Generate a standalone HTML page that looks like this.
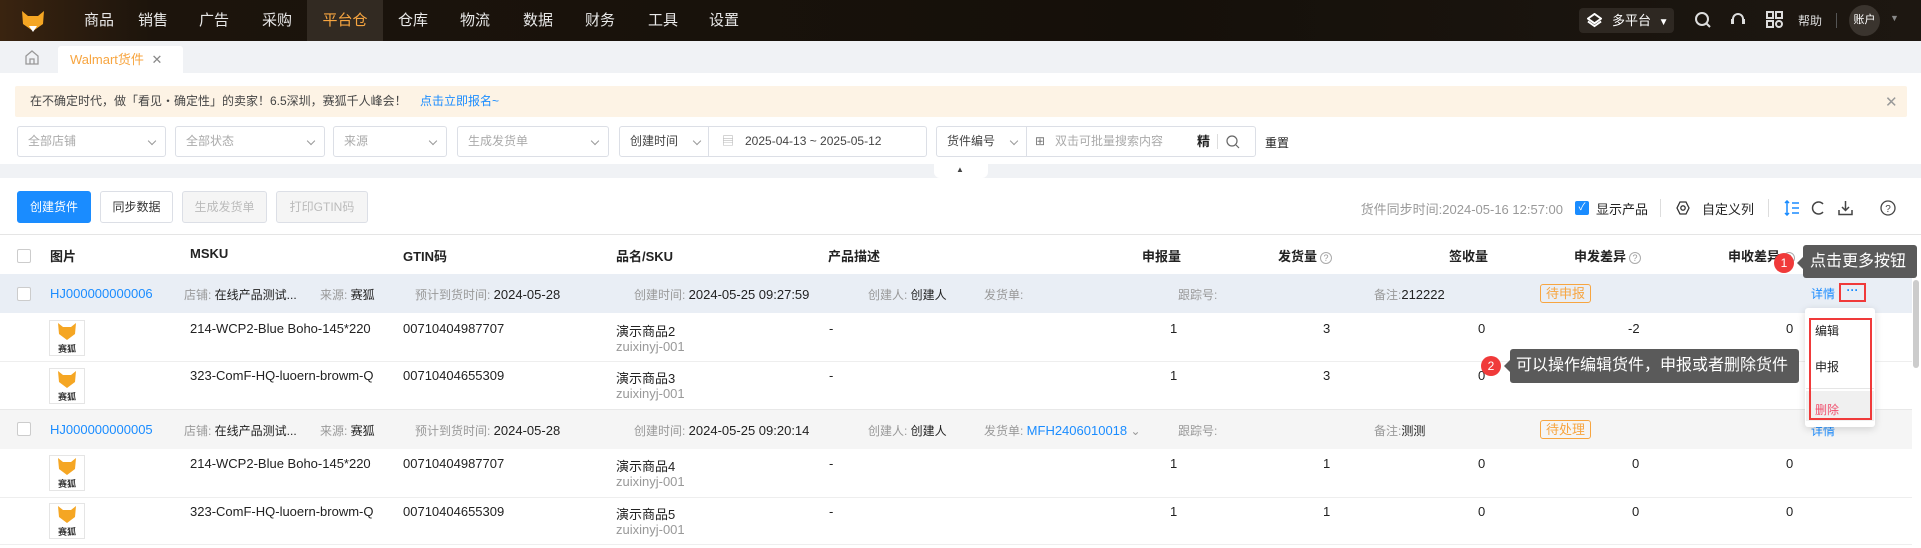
<!DOCTYPE html>
<html><head><meta charset="utf-8"><style>
*{box-sizing:border-box;margin:0;padding:0}
body{width:1921px;height:548px;overflow:hidden;background:#fff;font-family:"Liberation Sans","Noto Sans CJK SC",sans-serif;font-size:13px;color:#222;position:relative}
.a{position:absolute;white-space:nowrap}
.nav{left:0;top:0;width:1921px;height:41px;background:linear-gradient(90deg,#3a2410 0,#1c140c 8%,#15100a 60%,#1d1711 100%)}
.ni{top:0;height:41px;line-height:41px;color:#e8e8e8;font-size:15px;transform:translateX(-50%)}
.sel{height:31px;top:126px;border:1px solid #dcdfe6;border-radius:3px;color:#aaa;font-size:12px;line-height:29px;padding-left:10px;background:#fff}
.chev{position:absolute;right:10px;top:11px;width:6px;height:6px;border-right:1px solid #999;border-bottom:1px solid #999;transform:rotate(45deg)}
.btn{top:191px;height:32px;border-radius:3px;font-size:12px;line-height:30px;text-align:center;border:1px solid #dcdfe6}
.hd{top:246px;font-weight:bold;font-size:13px;color:#222}
.q{display:inline-block;width:12px;height:12px;border:1px solid #aaa;border-radius:50%;font-size:9px;line-height:10px;text-align:center;color:#999;font-weight:normal;vertical-align:middle;margin-left:3px}
.g{color:#999}
.cb{width:14px;height:14px;border:1px solid #ccc;border-radius:2px;background:#fff}
.img{width:36px;height:36px;border:1px solid #e5e5e5;background:#fff}
.tag{height:19px;border:1px solid #f7a540;border-radius:3px;color:#f7a540;font-size:13px;line-height:17px;padding:0 5px}
.blue{color:#1a8cff}
</style></head><body>
<div class="a nav"></div>
<svg class="a" style="left:21px;top:10px" width="24" height="24" viewBox="0 0 24 24"><path d="M1 1 L7 6 L17 6 L23 1 L22 14 L12 21 L2 14Z" fill="#f5a623"/><path d="M8 16 L12 22 L16 16Z" fill="#fff"/></svg>
<div class="a" style="left:307px;top:0;width:76px;height:41px;background:#322a22"></div>
<div class="a ni" style="left:99px">商品</div><div class="a ni" style="left:153px">销售</div><div class="a ni" style="left:214px">广告</div><div class="a ni" style="left:277px">采购</div><div class="a ni" style="left:345px;color:#f7a540">平台仓</div><div class="a ni" style="left:413px">仓库</div><div class="a ni" style="left:475px">物流</div><div class="a ni" style="left:538px">数据</div><div class="a ni" style="left:600px">财务</div><div class="a ni" style="left:663px">工具</div><div class="a ni" style="left:724px">设置</div>
<div class="a" style="left:1579px;top:8px;width:95px;height:25px;background:#2e2822;border-radius:4px;color:#fff;font-size:13px;line-height:25px;padding-left:33px">多平台 <span style="font-size:10px;margin-left:4px">▼</span></div>
<svg class="a" style="left:1587px;top:13px" width="15" height="15" viewBox="0 0 16 16"><path d="M8 1 L15 6 L8 11 L1 6Z M1 9 L8 14 L15 9" fill="none" stroke="#fff" stroke-width="2"/></svg>
<svg class="a" style="left:1694px;top:11px" width="18" height="18" viewBox="0 0 18 18"><circle cx="8" cy="8" r="6" fill="none" stroke="#ddd" stroke-width="2"/><path d="M12 12 L16 16" stroke="#ddd" stroke-width="2"/></svg>
<svg class="a" style="left:1729px;top:11px" width="18" height="18" viewBox="0 0 18 18"><path d="M4 12 V8 A5 5 0 0 1 14 8 V11" fill="none" stroke="#ddd" stroke-width="2"/><rect x="2" y="8" width="3" height="5" fill="#ddd"/><rect x="13" y="8" width="3" height="5" fill="#ddd"/></svg>
<svg class="a" style="left:1766px;top:11px" width="17" height="17" viewBox="0 0 17 17"><g fill="none" stroke="#ddd" stroke-width="2"><rect x="1" y="1" width="6" height="6"/><rect x="10" y="1" width="6" height="6"/><rect x="1" y="10" width="6" height="6"/><rect x="10" y="10" width="6" height="6" rx="3"/></g></svg>
<div class="a" style="left:1798px;top:12px;color:#ddd;font-size:12px">帮助</div>
<div class="a" style="left:1836px;top:13px;width:1px;height:15px;background:#555"></div>
<div class="a" style="left:1849px;top:5px;width:31px;height:31px;border-radius:50%;background:#3a342e;color:#fff;font-size:11px;line-height:31px;text-align:center">账户</div>
<div class="a" style="left:1890px;top:13px;color:#888;font-size:9px">▼</div>
<div class="a" style="left:0;top:41px;width:1921px;height:32px;background:#f0f2f5"></div>
<svg class="a" style="left:25px;top:50px" width="14" height="15" viewBox="0 0 14 15"><path d="M1 6 L7 1 L13 6 V14 H1Z M5 14 V9 H9 V14" fill="none" stroke="#999" stroke-width="1.3"/></svg>
<div class="a" style="left:58px;top:46px;width:125px;height:27px;background:#fff;border-radius:3px 3px 0 0;color:#f7a540;font-size:13px;line-height:27px;padding-left:12px">Walmart货件 <span style="color:#888;margin-left:4px">✕</span></div>
<div class="a" style="left:15px;top:86px;width:1892px;height:31px;background:#fdf3e5;border-radius:2px;font-size:12px;line-height:31px;padding-left:15px;color:#444">在不确定时代，做「看见・确定性」的卖家！6.5深圳，赛狐千人峰会！ <span class="blue" style="margin-left:10px">点击立即报名~</span></div>
<div class="a" style="left:1885px;top:93px;color:#999;font-size:15px">✕</div>
<div class="a sel" style="left:17px;width:149px">全部店铺<i class="chev"></i></div>
<div class="a sel" style="left:175px;width:150px">全部状态<i class="chev"></i></div>
<div class="a sel" style="left:333px;width:114px">来源<i class="chev"></i></div>
<div class="a sel" style="left:457px;width:152px">生成发货单<i class="chev"></i></div>
<div class="a sel" style="left:619px;width:308px;color:#444"><span>创建时间</span><i class="chev" style="right:auto;left:74px"></i><span style="position:absolute;left:88px;top:0;height:29px;border-left:1px solid #dcdfe6"></span><span style="position:absolute;left:102px;top:0;color:#aaa">▤</span><span style="position:absolute;left:125px;top:0">2025-04-13 ~ 2025-05-12</span></div>
<div class="a sel" style="left:936px;width:320px;color:#444"><span>货件编号</span><i class="chev" style="right:auto;left:74px"></i><span style="position:absolute;left:89px;top:0;height:29px;border-left:1px solid #dcdfe6"></span><span style="position:absolute;left:98px;top:0;color:#777">⊞</span><span style="position:absolute;left:118px;top:0;color:#aaa">双击可批量搜索内容</span><span style="position:absolute;left:260px;top:0;color:#222;font-weight:bold;font-size:13px">精</span><span style="position:absolute;left:280px;top:7px;height:15px;border-left:1px solid #ddd"></span><svg style="position:absolute;left:289px;top:8px" width="14" height="14" viewBox="0 0 14 14"><circle cx="6" cy="6" r="5" fill="none" stroke="#666" stroke-width="1.2"/><path d="M10 10 L13 13" stroke="#666" stroke-width="1.2"/></svg></div>
<div class="a" style="left:1265px;top:134px;font-size:12px;color:#222">重置</div>
<div class="a" style="left:0;top:164px;width:1921px;height:14px;background:#f0f2f5"></div>
<div class="a" style="left:934px;top:164px;width:54px;height:14px;background:#fff;border-radius:0 0 6px 6px"></div>
<div class="a" style="left:956px;top:165px;font-size:8px;color:#444">▲</div>
<div class="a btn" style="left:17px;width:74px;background:#1a8cff;border-color:#1a8cff;color:#fff">创建货件</div>
<div class="a btn" style="left:100px;width:73px;color:#333">同步数据</div>
<div class="a btn" style="left:182px;width:85px;color:#bbb;background:#f5f5f5">生成发货单</div>
<div class="a btn" style="left:276px;width:92px;color:#bbb;background:#f5f5f5">打印GTIN码</div>
<div class="a" style="left:1353px;top:199px;width:210px;text-align:right;font-size:13px;color:#999">货件同步时间:2024-05-16 12:57:00</div>
<div class="a" style="left:1575px;top:201px;width:14px;height:14px;background:#1a8cff;border-radius:2px;color:#fff;font-size:10px;line-height:14px;text-align:center">✓</div>
<div class="a" style="left:1596px;top:199px;font-size:13px;color:#222">显示产品</div>
<div class="a" style="left:1660px;top:199px;width:1px;height:18px;background:#ddd"></div>
<svg class="a" style="left:1676px;top:201px" width="14" height="14" viewBox="0 0 14 14"><path d="M4 1 H10 L13 7 L10 13 H4 L1 7Z" fill="none" stroke="#333" stroke-width="1.3"/><circle cx="7" cy="7" r="2.2" fill="none" stroke="#333" stroke-width="1.3"/></svg>
<div class="a" style="left:1702px;top:199px;font-size:13px;color:#222">自定义列</div>
<div class="a" style="left:1768px;top:199px;width:1px;height:18px;background:#ddd"></div>
<svg class="a" style="left:1784px;top:200px" width="16" height="16" viewBox="0 0 16 16"><path d="M3 1 V15 M1 3 L3 1 L5 3 M1 13 L3 15 L5 13 M8 3 H15 M8 8 H15 M8 13 H15" fill="none" stroke="#1a8cff" stroke-width="1.5"/></svg>
<svg class="a" style="left:1811px;top:200px" width="15" height="16" viewBox="0 0 15 16"><path d="M12 4 A6 6 0 1 0 12 12" fill="none" stroke="#444" stroke-width="1.5"/></svg>
<svg class="a" style="left:1838px;top:200px" width="15" height="16" viewBox="0 0 15 16"><path d="M7.5 1 V10 M4 7 L7.5 10.5 L11 7 M1 10 V14.5 H14 V10" fill="none" stroke="#444" stroke-width="1.5"/></svg>
<svg class="a" style="left:1880px;top:200px" width="16" height="16" viewBox="0 0 16 16"><circle cx="8" cy="8" r="7" fill="none" stroke="#444" stroke-width="1.3"/><text x="8" y="12" font-size="10" text-anchor="middle" fill="#444" font-family="Liberation Sans">?</text></svg>
<div class="a" style="left:0;top:234px;width:1921px;height:1px;background:#e5e5e5"></div>
<div class="a cb" style="left:17px;top:249px"></div>
<div class="a hd" style="left:50px">图片</div><div class="a hd" style="left:190px">MSKU</div><div class="a hd" style="left:403px">GTIN码</div><div class="a hd" style="left:616px">品名/SKU</div><div class="a hd" style="left:828px">产品描述</div><div class="a hd" style="left:1142px">申报量</div><div class="a hd" style="left:1278px">发货量<span class="q">?</span></div><div class="a hd" style="left:1449px">签收量</div><div class="a hd" style="left:1574px">申发差异<span class="q">?</span></div><div class="a hd" style="left:1728px">申收差异<span class="q">?</span></div><div class="a hd" style="left:1809px">操作</div>
<div class="a" style="left:0;top:274px;width:1912px;height:39px;background:#e9eef5"></div>
<div class="a cb" style="left:17px;top:287px"></div>
<div class="a blue" style="left:50px;top:286px">HJ000000000006</div>
<div class="a" style="left:184px;top:286px;font-size:12px"><span class="g">店铺: </span>在线产品测试...</div>
<div class="a" style="left:320px;top:286px;font-size:12px"><span class="g">来源: </span>赛狐</div>
<div class="a" style="left:415px;top:286px"><span class="g" style="font-size:12px">预计到货时间: </span>2024-05-28</div>
<div class="a" style="left:634px;top:286px"><span class="g" style="font-size:12px">创建时间: </span>2024-05-25 09:27:59</div>
<div class="a" style="left:868px;top:286px;font-size:12px"><span class="g">创建人: </span>创建人</div>
<div class="a g" style="left:984px;top:286px;font-size:12px">发货单:</div>
<div class="a g" style="left:1178px;top:286px;font-size:12px">跟踪号:</div>
<div class="a" style="left:1374px;top:286px"><span class="g" style="font-size:12px">备注:</span>212222</div>
<div class="a tag" style="left:1540px;top:284px">待申报</div>
<div class="a blue" style="left:1811px;top:285px;font-size:12px">详情</div>
<div class="a" style="left:1839px;top:283px;width:27px;height:19px;border:2px solid #f03a3a;color:#1a8cff;font-size:12px;font-weight:bold;line-height:11px;text-align:center">···</div>
<div class="a img" style="left:49px;top:320px"></div><div class="a" style="left:190px;top:321px">214-WCP2-Blue Boho-145*220</div><div class="a" style="left:403px;top:321px">00710404987707</div><div class="a" style="left:616px;top:321px">演示商品2</div><div class="a g" style="left:616px;top:339px">zuixinyj-001</div><div class="a" style="left:829px;top:321px">-</div>
<div class="a" style="left:1170px;top:321px">1</div><div class="a" style="left:1323px;top:321px">3</div><div class="a" style="left:1478px;top:321px">0</div><div class="a" style="left:1628px;top:321px">-2</div><div class="a" style="left:1786px;top:321px">0</div>
<div class="a" style="left:0;top:361px;width:1912px;height:1px;background:#eee"></div>
<div class="a img" style="left:49px;top:368px"></div><div class="a" style="left:190px;top:368px">323-ComF-HQ-luoern-browm-Q</div><div class="a" style="left:403px;top:368px">00710404655309</div><div class="a" style="left:616px;top:368px">演示商品3</div><div class="a g" style="left:616px;top:386px">zuixinyj-001</div><div class="a" style="left:829px;top:368px">-</div>
<div class="a" style="left:1170px;top:368px">1</div><div class="a" style="left:1323px;top:368px">3</div><div class="a" style="left:1478px;top:368px">0</div><div class="a" style="left:1628px;top:368px">-2</div><div class="a" style="left:1786px;top:368px">0</div>
<div class="a" style="left:0;top:409px;width:1912px;height:40px;background:#f5f5f5;border-top:1px solid #e8e8e8"></div>
<div class="a cb" style="left:17px;top:422px"></div>
<div class="a blue" style="left:50px;top:422px">HJ000000000005</div>
<div class="a" style="left:184px;top:422px;font-size:12px"><span class="g">店铺: </span>在线产品测试...</div>
<div class="a" style="left:320px;top:422px;font-size:12px"><span class="g">来源: </span>赛狐</div>
<div class="a" style="left:415px;top:422px"><span class="g" style="font-size:12px">预计到货时间: </span>2024-05-28</div>
<div class="a" style="left:634px;top:422px"><span class="g" style="font-size:12px">创建时间: </span>2024-05-25 09:20:14</div>
<div class="a" style="left:868px;top:422px;font-size:12px"><span class="g">创建人: </span>创建人</div>
<div class="a" style="left:984px;top:422px;font-size:12px"><span class="g">发货单: </span><span class="blue" style="font-size:13px">MFH2406010018</span> <span class="g">⌄</span></div>
<div class="a g" style="left:1178px;top:422px;font-size:12px">跟踪号:</div>
<div class="a" style="left:1374px;top:422px;font-size:12px"><span class="g">备注:</span>测测</div>
<div class="a tag" style="left:1540px;top:420px">待处理</div>
<div class="a blue" style="left:1811px;top:422px;font-size:12px">详情</div><div class="a blue" style="left:1846px;top:418px;font-weight:bold">···</div>
<div class="a img" style="left:49px;top:455px"></div><div class="a" style="left:190px;top:456px">214-WCP2-Blue Boho-145*220</div><div class="a" style="left:403px;top:456px">00710404987707</div><div class="a" style="left:616px;top:456px">演示商品4</div><div class="a g" style="left:616px;top:474px">zuixinyj-001</div><div class="a" style="left:829px;top:456px">-</div>
<div class="a" style="left:1170px;top:456px">1</div><div class="a" style="left:1323px;top:456px">1</div><div class="a" style="left:1478px;top:456px">0</div><div class="a" style="left:1632px;top:456px">0</div><div class="a" style="left:1786px;top:456px">0</div>
<div class="a" style="left:0;top:497px;width:1912px;height:1px;background:#eee"></div>
<div class="a img" style="left:49px;top:503px"></div><div class="a" style="left:190px;top:504px">323-ComF-HQ-luoern-browm-Q</div><div class="a" style="left:403px;top:504px">00710404655309</div><div class="a" style="left:616px;top:504px">演示商品5</div><div class="a g" style="left:616px;top:522px">zuixinyj-001</div><div class="a" style="left:829px;top:504px">-</div>
<div class="a" style="left:1170px;top:504px">1</div><div class="a" style="left:1323px;top:504px">1</div><div class="a" style="left:1478px;top:504px">0</div><div class="a" style="left:1632px;top:504px">0</div><div class="a" style="left:1786px;top:504px">0</div>
<div class="a" style="left:0;top:544px;width:1912px;height:1px;background:#eee"></div>
<svg class="a" style="left:56px;top:322px" width="22" height="32" viewBox="0 0 22 32"><path d="M2 1 L7 5 L15 5 L20 1 L19 12 L11 18 L3 12Z" fill="#f5a623"/><text x="11" y="30" font-size="9" text-anchor="middle" font-weight="bold" fill="#333" font-family="Noto Sans CJK SC">赛狐</text></svg>
<svg class="a" style="left:56px;top:370px" width="22" height="32" viewBox="0 0 22 32"><path d="M2 1 L7 5 L15 5 L20 1 L19 12 L11 18 L3 12Z" fill="#f5a623"/><text x="11" y="30" font-size="9" text-anchor="middle" font-weight="bold" fill="#333" font-family="Noto Sans CJK SC">赛狐</text></svg>
<svg class="a" style="left:56px;top:457px" width="22" height="32" viewBox="0 0 22 32"><path d="M2 1 L7 5 L15 5 L20 1 L19 12 L11 18 L3 12Z" fill="#f5a623"/><text x="11" y="30" font-size="9" text-anchor="middle" font-weight="bold" fill="#333" font-family="Noto Sans CJK SC">赛狐</text></svg>
<svg class="a" style="left:56px;top:505px" width="22" height="32" viewBox="0 0 22 32"><path d="M2 1 L7 5 L15 5 L20 1 L19 12 L11 18 L3 12Z" fill="#f5a623"/><text x="11" y="30" font-size="9" text-anchor="middle" font-weight="bold" fill="#333" font-family="Noto Sans CJK SC">赛狐</text></svg>
<div class="a" style="left:1913px;top:280px;width:6px;height:88px;background:#ccc;border-radius:3px"></div>
<div class="a" style="left:1805px;top:308px;width:70px;height:119px;background:#fff;border-radius:3px;box-shadow:0 2px 8px rgba(0,0,0,.15)"></div>
<div class="a" style="left:1806px;top:391px;width:68px;height:30px;background:#f0f0f0"></div>
<div class="a" style="left:1806px;top:388px;width:68px;height:1px;background:#e5e5e5"></div>
<div class="a" style="left:1815px;top:322px;font-size:12px">编辑</div>
<div class="a" style="left:1815px;top:358px;font-size:12px">申报</div>
<div class="a" style="left:1815px;top:401px;font-size:12px;color:#f0506e">删除</div>
<div class="a" style="left:1809px;top:318px;width:63px;height:102px;border:2px solid #f03a3a"></div>
<div class="a" style="left:1803px;top:245px;width:114px;height:33px;background:#5a5a5a;border-radius:3px;color:#fff;font-size:16px;line-height:33px;padding-left:7px">点击更多按钮</div>
<div class="a" style="left:1797px;top:257px;width:0;height:0;border:6px solid transparent;border-right-color:#5a5a5a;border-left:0"></div>
<div class="a" style="left:1774px;top:253px;width:20px;height:20px;border-radius:50%;background:#f03a3a;color:#fff;font-size:12px;line-height:20px;text-align:center">1</div>
<div class="a" style="left:1510px;top:349px;width:289px;height:34px;background:#5a5a5a;border-radius:3px;color:#fff;font-size:16px;line-height:34px;padding-left:6px">可以操作编辑货件，申报或者删除货件</div>
<div class="a" style="left:1504px;top:360px;width:0;height:0;border:6px solid transparent;border-right-color:#5a5a5a;border-left:0"></div>
<div class="a" style="left:1481px;top:356px;width:20px;height:20px;border-radius:50%;background:#f03a3a;color:#fff;font-size:12px;line-height:20px;text-align:center">2</div>
</body></html>
